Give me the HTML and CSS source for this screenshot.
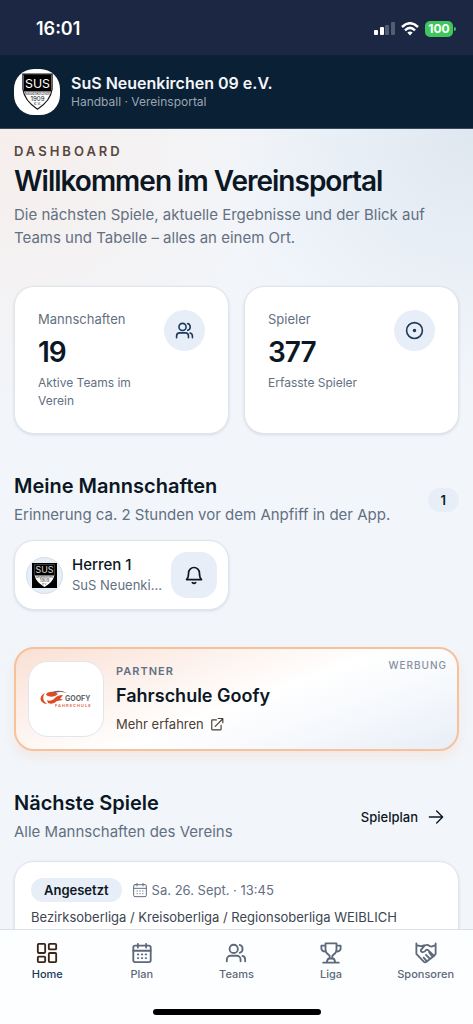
FILE: index.html
```html
<!DOCTYPE html>
<html lang="de">
<head>
  <meta charset="UTF-8" />
  <meta name="viewport" content="width=device-width, initial-scale=1.0" />
  <title>SuS Neuenkirchen 09 e.V.</title>
  <link rel="stylesheet" href="styles.css">
</head>
<body>
  <!-- Shared icons -->
  <svg class="sprite" aria-hidden="true">
    <symbol id="users" viewBox="0 0 24 24">
      <circle cx="9.500" cy="7.500" r="4.500"/>
      <path d="M2 21V19A4 4 0 0 1 6 15H13A4 4 0 0 1 17 19V21M16 3.200A4.500 4.500 0 0 1 16 11.800M19 15.200A4 4 0 0 1 22 19V21"/>
    </symbol>
    <symbol id="calendar" viewBox="0 0 24 24">
      <rect x="2.500" y="4" width="19" height="18" rx="2"/>
      <path d="M2.500 9.500H21.500M7.500 2V6M16.500 2V6"/>
      <path d="M7.500 13.500H8M11.800 13.500H12.300M16 13.500H16.500M7.500 17.500H8M11.800 17.500H12.300M16 17.500H16.500"/>
    </symbol>
  </svg>

  <div class="app">
    <!-- Status bar -->
    <div class="status-bar">
      <span class="clock">16:01</span>
      <div class="status-icons">
        <svg width="21" height="13" viewBox="0 0 21 13" fill="#fff">
          <rect x="0" y="8" width="4" height="5" rx="1"/>
          <rect x="6" y="5" width="4" height="8" rx="1"/>
          <rect x="11" y="3" width="4" height="10" rx="1" opacity=".25"/>
          <rect x="17" y="0" width="4" height="13" rx="1" opacity=".25"/>
        </svg>
        <svg width="18" height="14" viewBox="0 0 18 14" fill="none" stroke="#fff" stroke-width="2.500">
          <path d="M1 5Q9 -2.500 17 5M4 8.300Q9 3.500 14 8.300"/>
          <path d="M6.300 10.500Q9 8.300 11.700 10.500L9 13.500Z" fill="#fff" stroke="none"/>
        </svg>
        <span class="battery">100</span>
      </div>
    </div>

    <!-- Club header -->
    <header class="club-header">
      <div class="club-logo">
        <svg class="crest" width="31" height="37" viewBox="0 0 40 48">
          <path d="M1 1.500H39V21Q37 36 20 47Q3 36 1 21Z" fill="#fff" stroke="#111" stroke-width="1.400"/>
          <path d="M2 2H38V24H2Z" fill="#000"/>
          <text x="20" y="19" font-size="16" font-weight="400" fill="#fff">SUS</text>
          <text x="20" y="29" font-size="5" fill="#111">Neuenkirchen</text>
          <text x="20" y="36" font-size="8" fill="#111">1909</text>
          <text x="20" y="42" font-size="5" fill="#111">e.V.</text>
        </svg>
      </div>
      <div>
        <div class="club-name">SuS Neuenkirchen 09 e.V.</div>
        <div class="club-sub">Handball · Vereinsportal</div>
      </div>
    </header>

    <main class="content">
      <!-- Intro -->
      <section class="intro">
        <div class="eyebrow">DASHBOARD</div>
        <h1>Willkommen im Vereinsportal</h1>
        <p class="lead">Die nächsten Spiele, aktuelle Ergebnisse und der Blick auf Teams und Tabelle – alles an einem Ort.</p>
      </section>

      <!-- Stats -->
      <section class="grid">
        <div class="card stat">
          <div>
            <div class="stat-label">Mannschaften</div>
            <div class="stat-value">19</div>
            <div class="stat-note">Aktive Teams im Verein</div>
          </div>
          <div class="stat-icon"><svg class="icon" width="19" height="19"><use href="#users"/></svg></div>
        </div>
        <div class="card stat">
          <div>
            <div class="stat-label">Spieler</div>
            <div class="stat-value">377</div>
            <div class="stat-note">Erfasste Spieler</div>
          </div>
          <div class="stat-icon">
            <svg class="icon" width="19" height="19" viewBox="0 0 24 24"><circle cx="12" cy="12" r="10"/><circle cx="12" cy="12" r="1.200" fill="currentColor"/></svg>
          </div>
        </div>
      </section>

      <!-- My teams -->
      <section>
        <div class="section-head">
          <div>
            <h2>Meine Mannschaften</h2>
            <p class="section-sub">Erinnerung ca. 2 Stunden vor dem Anpfiff in der App.</p>
          </div>
          <span class="count">1</span>
        </div>
        <div class="grid">
          <div class="card team">
            <div class="team-logo">
              <svg class="crest" width="25" height="25" viewBox="0 0 48 48">
                <path d="M0 0H48V48H0Z" fill="#000"/>
                <path d="M5 24H43Q40 37 24 46Q8 37 5 24Z" fill="#fff"/>
                <path d="M5 3H43V24H5Z" fill="none" stroke="#777" stroke-width="1"/>
                <text x="24" y="20" font-size="17" font-weight="400" fill="#ddd">SUS</text>
                <text x="24" y="29" font-size="5" fill="#111">Neuenkirchen</text>
                <text x="24" y="36" font-size="8" fill="#111">1909</text>
                <text x="24" y="42" font-size="5" fill="#111">e.V.</text>
              </svg>
            </div>
            <div class="team-text">
              <div class="team-name">Herren 1</div>
              <div class="team-club">SuS Neuenkirchen 09</div>
            </div>
            <button class="bell" aria-label="Erinnerung">
              <svg class="icon" width="20" height="20" viewBox="0 0 24 24"><path d="M3 17.500C5 15.500 5.500 13.500 5.500 9.500A6.500 6.500 0 0 1 18.500 9.500C18.500 13.500 19 15.500 21 17.500ZM10 21.200Q12 22.800 14 21.200"/></svg>
            </button>
          </div>
        </div>
      </section>

      <!-- Sponsor -->
      <section class="partner">
        <div class="partner-logo">
          <svg width="54" height="18" viewBox="0 0 54 18">
            <path d="M3 12Q0 9 3 5L6 3Q3 7 5 11L8 14Q5 14 3 12ZM8 3Q14 0 19 4Q15 8 9 6Q6 5 8 3ZM8 10Q11 12 15 9Q18 5 24 5L21 9Q23 9 24 10L18 11Q14 15 9 13Z" fill="#df4a20"/>
            <path d="M13 2Q21 -1 28 3Q21 1 16 3Z" fill="#666a70"/>
            <text x="26" y="11" font-size="7" font-weight="700" fill="#60646a">GOOFY</text>
            <text x="16" y="17" font-size="4" font-weight="600" letter-spacing="1" fill="#e0653f">FAHRSCHULE</text>
          </svg>
        </div>
        <div>
          <div class="partner-label">PARTNER</div>
          <div class="partner-name">Fahrschule Goofy</div>
          <a class="partner-link" href="#">Mehr erfahren
            <svg class="icon" width="14" height="14" viewBox="0 0 24 24"><path d="M11 5H4Q3 5 3 6V21Q3 22 4 22H18Q19 22 19 21V14M9 16L22 3M14 2.500H22V10"/></svg>
          </a>
        </div>
        <span class="ad-label">WERBUNG</span>
      </section>

      <!-- Upcoming matches -->
      <section class="matches">
        <div class="section-head">
          <div>
            <h2>Nächste Spiele</h2>
            <p class="section-sub">Alle Mannschaften des Vereins</p>
          </div>
          <a class="more" href="#">Spielplan
            <svg class="icon" width="16" height="16" viewBox="0 0 24 24"><path d="M2 12H22M13 3L22 12L13 21"/></svg>
          </a>
        </div>
        <div class="card match">
          <div class="match-meta">
            <span class="badge">Angesetzt</span>
            <span class="date"><svg class="icon thin" width="16" height="16"><use href="#calendar"/></svg>Sa. 26. Sept. · 13:45</span>
          </div>
          <div class="league">Bezirksoberliga / Kreisoberliga / Regionsoberliga WEIBLICH</div>
        </div>
      </section>
    </main>

    <!-- Bottom navigation -->
    <nav class="bottom-nav">
      <div class="tabs">
        <a class="tab active" href="#">
          <svg class="icon" width="22" height="22" viewBox="0 0 24 24"><rect x="2" y="2" width="8" height="10" rx="1"/><rect x="14" y="2" width="8" height="6" rx="1"/><rect x="2" y="16" width="8" height="6" rx="1"/><rect x="14" y="12" width="8" height="10" rx="1"/></svg>
          Home
        </a>
        <a class="tab" href="#">
          <svg class="icon" width="22" height="22"><use href="#calendar"/></svg>
          Plan
        </a>
        <a class="tab" href="#">
          <svg class="icon" width="22" height="22"><use href="#users"/></svg>
          Teams
        </a>
        <a class="tab" href="#">
          <svg class="icon" width="22" height="22" viewBox="0 0 24 24"><path d="M6 1.500H18V8Q18 12 15 13.500L13.500 15V18H10.500V15L9 13.500Q6 12 6 8ZM6 4H1.500V7Q1.500 10 6 10.500M18 4H22.500V7Q22.500 10 18 10.500M10.500 18Q8 18 7.500 22M13.500 18Q16 18 16.500 22M3.500 22.500H20.500"/></svg>
          Liga
        </a>
        <a class="tab" href="#">
          <svg class="icon" width="22" height="22" viewBox="0 0 24 24"><path d="M1.500 1.500V13L9.500 21.500Q11 23 12.500 21.500L21 15L22.500 13V1.500M1.500 3.500L6 4.500Q8 4.500 10 3.500M22.500 3.500L18 5Q16 5 14.500 3.500Q12 2.500 10 4.500L6.500 8.500Q6 10.500 8 11Q10.500 11.500 12 8.500L14 8.500L20.500 15M12 14L16 18M15.500 11.500L19 16M9.500 17L12.500 20.500"/></svg>
          Sponsoren
        </a>
      </div>
      <div class="home-indicator"></div>
    </nav>
  </div>
</body>
</html>
```
FILE: styles.css
```css
* {
  box-sizing: border-box;
}
body {
  margin: 0;
  font-family: Inter, "Liberation Sans", sans-serif;
  color: #0c1724;
}
h1, h2, p {
  margin: 0;
}
a {
  color: inherit;
  text-decoration: none;
}
.sprite {
  position: absolute;
  width: 0;
  height: 0;
}
.icon {
  fill: none;
  stroke: currentColor;
  stroke-width: 2;
  stroke-linecap: round;
  stroke-linejoin: round;
  flex: none;
}
.icon.thin {
  stroke-width: 1.5;
}
.crest text {
  text-anchor: middle;
}
.app {
  height: 100vh;
  display: flex;
  flex-direction: column;
}
/* Status bar */
.status-bar {
  flex: none;
  height: 55px;
  padding: 2px 20px 0 36px;
  display: flex;
  align-items: center;
  justify-content: space-between;
  background: #1b2743;
  color: #fff;
}
.clock {
  font-size: 18px;
  font-weight: 600;
}
.status-icons {
  display: flex;
  align-items: center;
  gap: 6px;
}
.battery {
  position: relative;
  width: 28px;
  height: 16px;
  border-radius: 5px;
  background: #3dc75c;
  font-size: 12px;
  line-height: 16px;
  font-weight: 700;
  text-align: center;
}
.battery::after {
  content: "";
  position: absolute;
  top: 6px;
  right: -3px;
  width: 2px;
  height: 4px;
  border-radius: 0 2px 2px 0;
  background: #3dc75c;
}
/* Club header */
.club-header {
  flex: none;
  height: 74px;
  padding: 0 14px;
  display: flex;
  align-items: center;
  gap: 11px;
  background: #0a2035;
  color: #f3f6fa;
  border-bottom: 1px solid #36485a;
}
.club-logo {
  width: 46px;
  height: 46px;
  border-radius: 20px;
  background: #fff;
  display: flex;
  align-items: center;
  justify-content: center;
}
.club-name {
  font-size: 16px;
  line-height: 20px;
  font-weight: 600;
}
.club-sub {
  font-size: 12px;
  line-height: 17px;
  color: #9ba6b2;
}
/* Content */
.content {
  flex: 1;
  min-height: 0;
  overflow: hidden;
  padding: 13px 14px 0;
  display: flex;
  flex-direction: column;
  gap: 37px;
  background:
    radial-gradient(circle at 0 0, #f6eeeb 0, rgba(246, 238, 235, 0) 300px),
    radial-gradient(circle at 100% 0, #dfe7f0 0, rgba(223, 231, 240, 0) 260px),
    #f2f6fb;
}
.content > section {
  flex: none;
}
.eyebrow {
  font-size: 13px;
  line-height: 18px;
  font-weight: 600;
  letter-spacing: 3px;
  color: #58463d;
}
h1 {
  margin: 4px 0 5px;
  font-size: 28px;
  line-height: 34px;
  font-weight: 600;
  letter-spacing: -1px;
}
.lead {
  font-size: 15px;
  line-height: 23px;
  color: #637081;
}
.grid {
  display: grid;
  grid-template-columns: repeat(2, minmax(0, 1fr));
  gap: 15px;
}
.card {
  background: #fff;
  border: 1px solid #dfe5ec;
  border-radius: 20px;
  box-shadow: 0 1px 3px rgba(15, 35, 60, .12);
}
/* Stats */
.stat {
  padding: 23px;
  display: flex;
  justify-content: space-between;
  gap: 12px;
}
.stat-label {
  font-size: 13px;
  line-height: 18px;
  color: #637081;
}
.stat-value {
  margin: 7px 0 5px;
  font-size: 28px;
  line-height: 34px;
  font-weight: 600;
  letter-spacing: -1px;
}
.stat-note {
  font-size: 12px;
  line-height: 18px;
  color: #637081;
}
.stat-icon {
  flex: none;
  width: 41px;
  height: 41px;
  border-radius: 50%;
  background: #e8eef7;
  color: #193a5b;
  display: flex;
  align-items: center;
  justify-content: center;
}
/* Section heads */
.section-head {
  display: flex;
  align-items: center;
  justify-content: space-between;
  margin-bottom: 12px;
}
h2 {
  font-size: 20px;
  line-height: 31px;
  font-weight: 600;
}
.section-sub {
  font-size: 15px;
  line-height: 26px;
  color: #637081;
}
.count {
  padding: 0 13px;
  border-radius: 12px;
  background: #e8eef7;
  font-size: 13px;
  line-height: 24px;
  font-weight: 600;
}
/* Team card */
.team {
  padding: 11px;
  display: flex;
  align-items: center;
  gap: 9px;
}
.team-logo {
  flex: none;
  width: 37px;
  height: 37px;
  border: 1px solid #d6deea;
  border-radius: 50%;
  background: #e8eef7;
  display: flex;
  align-items: center;
  justify-content: center;
}
.team-text {
  flex: 1;
  min-width: 0;
}
.team-name {
  font-size: 15px;
  line-height: 20px;
  font-weight: 500;
}
.team-club {
  font-size: 13px;
  line-height: 20px;
  color: #637081;
  overflow: hidden;
  white-space: nowrap;
  text-overflow: ellipsis;
}
.bell {
  flex: none;
  width: 46px;
  height: 46px;
  padding: 0;
  border: none;
  border-radius: 16px;
  background: #e8eef7;
  color: #0c1724;
  display: flex;
  align-items: center;
  justify-content: center;
}
/* Sponsor */
.partner {
  position: relative;
  padding: 12px;
  display: flex;
  align-items: center;
  gap: 12px;
  border: 2px solid #f6c19b;
  border-radius: 20px;
  background: linear-gradient(160deg, #fae0d4 0%, #fff 52%, #f5f8fc 75%, #e8eef7 100%);
  box-shadow: 0 6px 14px rgba(240, 150, 90, .15);
}
.partner-logo {
  flex: none;
  width: 76px;
  height: 76px;
  border: 1px solid #e2e6ec;
  border-radius: 20px;
  background: #fff;
  display: flex;
  align-items: center;
  justify-content: center;
}
.partner-label {
  font-size: 11px;
  line-height: 16px;
  font-weight: 600;
  letter-spacing: 1px;
  color: #637081;
}
.partner-name {
  margin: 4px 0;
  font-size: 18px;
  line-height: 26px;
  font-weight: 600;
}
.partner-link {
  display: flex;
  align-items: center;
  gap: 6px;
  font-size: 13px;
  line-height: 22px;
  color: #4d3d35;
}
.ad-label {
  position: absolute;
  top: 8px;
  right: 10px;
  font-size: 10px;
  line-height: 16px;
  font-weight: 500;
  letter-spacing: 1px;
  color: #87909d;
}
/* Matches */
.matches .section-head {
  margin-bottom: 16px;
}
.more {
  padding-right: 15px;
  display: flex;
  align-items: center;
  gap: 10px;
  font-size: 13px;
  font-weight: 500;
}
.match {
  padding: 16px;
  padding-bottom: 24px;
}
.match-meta {
  display: flex;
  align-items: center;
  gap: 10px;
  margin-bottom: 5px;
}
.badge {
  padding: 0 13px;
  border-radius: 12px;
  background: #e8eef7;
  font-size: 13px;
  line-height: 24px;
  font-weight: 600;
}
.date {
  display: flex;
  align-items: center;
  gap: 4px;
  font-size: 13px;
  line-height: 20px;
  color: #637081;
}
.league {
  font-size: 13px;
  line-height: 20px;
  color: #3c4551;
}
/* Bottom navigation */
.bottom-nav {
  flex: none;
  height: 95px;
  padding-top: 12px;
  display: flex;
  flex-direction: column;
  justify-content: space-between;
  background: #fdfeff;
  border-top: 1px solid #d8e0e9;
}
.tabs {
  display: grid;
  grid-template-columns: repeat(5, 1fr);
}
.tab {
  display: flex;
  flex-direction: column;
  align-items: center;
  gap: 2px;
  font-size: 11px;
  line-height: 16px;
  font-weight: 500;
  color: #5d6979;
}
.tab.active {
  color: #193a5b;
}
.tab.active .icon {
  color: #3c2415;
}
.home-indicator {
  width: 168px;
  height: 6px;
  margin: 0 auto 9px;
  border-radius: 3px;
  background: #000;
}
```
